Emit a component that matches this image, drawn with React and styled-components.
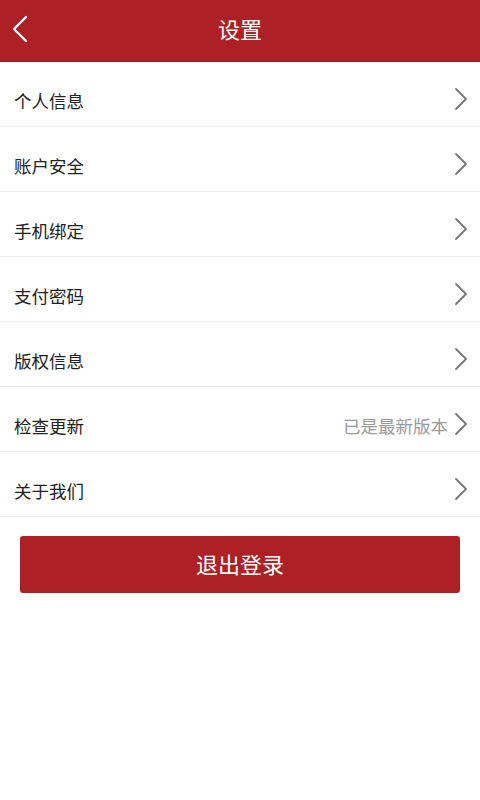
import React from "react";
import styled, { createGlobalStyle } from "styled-components";

const Global = createGlobalStyle`
  html, body { margin: 0; padding: 0; background: #fff; }
  body { font-family: "Noto Sans CJK SC", "Noto Sans", sans-serif; }
`;

const Page = styled.div`
  width: 480px;
  min-height: 800px;
  background: #fff;
`;

const Header = styled.header`
  height: 61px;
  background: #ad2126;
  border-bottom: 1px solid #9e1b20;
  display: grid;
  grid-template-columns: 60px 1fr 60px;
  align-items: center;
`;

const Back = styled.button`
  background: none;
  border: 0;
  padding: 0 0 3px 11px;
  height: 100%;
  display: flex;
  align-items: center;
`;

const Title = styled.h1`
  margin: 0;
  text-align: center;
  color: #fff;
  font-size: 22px;
  font-weight: 400;
  line-height: 1;
  padding-bottom: 6px;
`;

const List = styled.ul`
  list-style: none;
  margin: 0;
  padding: 0;
`;

const Row = styled.li`
  height: 64px;
  border-bottom: 1px solid #ececec;
  display: flex;
  align-items: center;
  padding: 0 12px 0 14px;
  box-sizing: content-box;
`;

const Label = styled.span`
  flex: 1;
  font-size: 17.5px;
  color: #222;
  padding-top: 12px;
`;

const Extra = styled.span`
  font-size: 17.5px;
  color: #9a9a9a;
  margin-right: 6px;
  padding-top: 12px;
`;

const Chevron = styled.svg`
  width: 14px;
  height: 24px;
  margin-top: 10px;
`;

const Logout = styled.button`
  display: block;
  margin: 19px 20px 0;
  width: 440px;
  height: 57px;
  background: #ad2126;
  border: 0;
  border-radius: 3px;
  color: #fff;
  font-family: inherit;
  font-size: 22px;
  font-weight: 400;
  padding: 0 0 4px;
`;

const items = [
  { label: "个人信息" },
  { label: "账户安全" },
  { label: "手机绑定" },
  { label: "支付密码" },
  { label: "版权信息" },
  { label: "检查更新", extra: "已是最新版本" },
  { label: "关于我们" },
];

export default function App() {
  return (
    <Page>
      <Global />
      <Header>
        <Back aria-label="返回">
          <svg width="18" height="28" viewBox="0 0 18 28">
            <path d="M15 2 L3 14 L15 26" fill="none" stroke="#fff" strokeWidth="2.4" strokeLinecap="round" strokeLinejoin="round" />
          </svg>
        </Back>
        <Title>设置</Title>
        <span />
      </Header>
      <List>
        {items.map((it) => (
          <Row key={it.label}>
            <Label>{it.label}</Label>
            {it.extra && <Extra>{it.extra}</Extra>}
            <Chevron viewBox="0 0 14 24">
              <path d="M2 2 L12 12 L2 22" fill="none" stroke="#777" strokeWidth="1.8" strokeLinecap="round" strokeLinejoin="round" />
            </Chevron>
          </Row>
        ))}
      </List>
      <Logout>退出登录</Logout>
    </Page>
  );
}
